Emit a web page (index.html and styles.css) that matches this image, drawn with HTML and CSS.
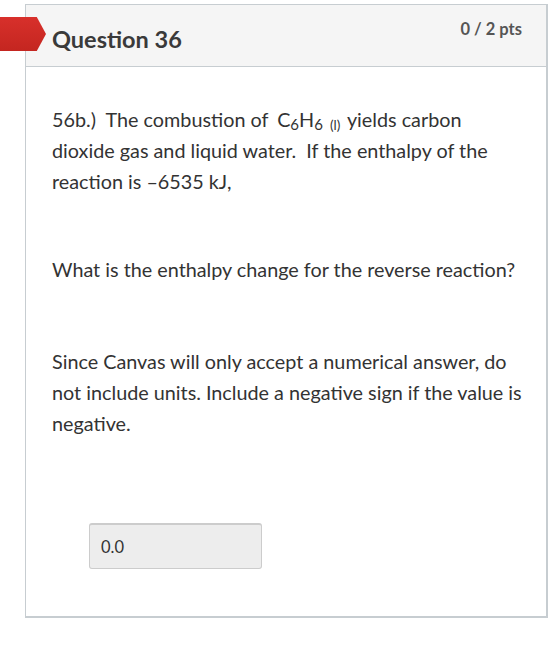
FILE: index.html
```html
<!DOCTYPE html>
<html lang="en">

<head>
    <meta charset="UTF-8">
    <meta name="viewport" content="width=device-width, initial-scale=1.0">
    <title>Question 36</title>
    <link rel="stylesheet" href="styles.css">
</head>

<body>

    <div class="quiz">
        <div class="question">
            <div class="flag"></div>
            <div class="question-header">
                <h2 class="question-title">Question 36</h2>
                <span class="points">0 / 2 pts</span>
            </div>

            <div class="question-body">
                <p>56b.)&nbsp; The combustion of <span class="formula">C<sub>6</sub>H<sub>6</sub> <sub class="phase">(l)</sub></span> yields carbon dioxide gas and liquid water.&nbsp; If the enthalpy of the reaction is &ndash;6535 kJ,</p>

                <p>What is the enthalpy change for the reverse reaction?</p>

                <p>Since Canvas will only accept a numerical answer, do not include units. Include a negative sign if the value is negative.</p>

                <div class="answer">
                    <input type="text" class="answer-input" value="0.0" readonly>
                </div>
            </div>
        </div>
    </div>

</body>

</html>
```

FILE: styles.css
```css
body {
    font-family: Lato, "Open Sans", sans-serif;
    background-color: #fff;
    color: #2d3b45;
    margin: 0;
}

.quiz {
    padding: 4px 12px 34px 25px;
}

.question {
    position: relative;
    border: 1px solid #c7cdd1;
    border-right-width: 2px;
    border-bottom-width: 2px;
}

.flag {
    position: absolute;
    left: -26px;
    top: 12px;
    width: 46px;
    height: 34px;
    background: linear-gradient(#d8302b, #c42620);
    clip-path: polygon(0 0, 80% 0, 100% 50%, 80% 100%, 0 100%);
}

.question-header {
    display: flex;
    justify-content: space-between;
    align-items: flex-start;
    background-color: #f5f5f5;
    border-bottom: 1px solid #c7cdd1;
    height: 61px;
    padding: 0 24px 0 26px;
}

.question-title {
    font-size: 23.5px;
    font-weight: bold;
    color: #3a3a3a;
    margin: 20px 0 0;
}

.points {
    font-size: 16.5px;
    font-weight: bold;
    color: #555;
    margin-top: 14px;
}

.question-body {
    padding: 37px 24px 47px 26px;
    font-size: 19.8px;
    line-height: 31px;
    color: #333;
}

.question-body p {
    margin: 0 0 57px;
}

.question-body p:nth-child(2) {
    margin-bottom: 61px;
}

.formula {
    margin-left: 4px;
}

.question-body sub {
    font-size: 15px;
    vertical-align: -3px;
    line-height: 1;
}

.question-body .phase {
    font-size: 13.5px;
    margin-left: 2px;
    margin-right: 2px;
}

.answer {
    margin-top: 84px;
    padding-left: 37px;
}

.answer-input {
    display: block;
    width: 173px;
    height: 46px;
    box-sizing: border-box;
    padding: 0 11px;
    font-family: Lato, sans-serif;
    font-size: 16.5px;
    color: #333;
    background-color: #ededed;
    border: 1px solid #ccc;
    border-top: 2px solid #ccc;
    border-radius: 3px;
}
```
